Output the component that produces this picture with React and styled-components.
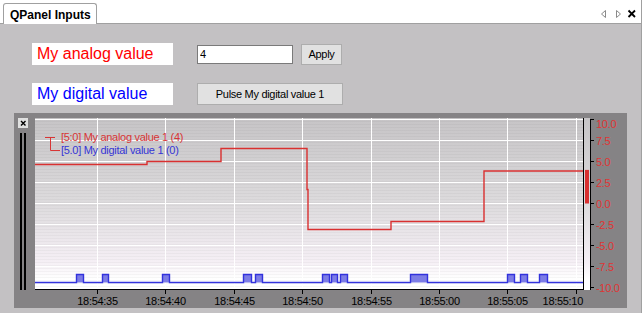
import React from 'react';
import styled, { createGlobalStyle } from 'styled-components';

const GlobalStyle = createGlobalStyle`
  html, body {
    margin: 0;
    padding: 0;
  }
  body {
    font-family: "Liberation Sans", Arial, sans-serif;
    background: #c3c1c3;
  }
`;

const Window = styled.div`
  width: 642px;
  height: 313px;
  box-sizing: border-box;
  border-right: 1px solid #a0a0a0;
  background: #c3c1c3;
  display: flex;
  flex-direction: column;
  overflow: hidden;
`;

const TabBar = styled.div`
  height: 23px;
  background: #fff;
  border-bottom: 1px solid #a0a0a0;
  display: flex;
  align-items: flex-end;
  padding-left: 3px;
`;

const Tab = styled.div`
  box-sizing: border-box;
  width: 94px;
  height: 21px;
  margin-bottom: -1px;
  padding: 2px 0 0 6px;
  border: 1px solid #a0a0a0;
  border-bottom: none;
  border-radius: 3px 3px 0 0;
  background: #fff;
  font-size: 12px;
  font-weight: bold;
  line-height: 18px;
  color: #000;
  white-space: nowrap;
`;

const TabNav = styled.svg`
  align-self: flex-start;
  margin: 5px 4px 0 auto;
`;

const Body = styled.div`
  flex: 1;
  padding: 19px 0 0 14px;
  display: flex;
  flex-direction: column;
`;

const Form = styled.div`
  display: grid;
  grid-template-columns: 141px auto;
  column-gap: 24px;
  row-gap: 18px;
  align-items: center;
  justify-content: start;
  padding-left: 18px;
`;

const ValueLabel = styled.div`
  height: 22px;
  background: #fff;
  color: ${(p) => p.$color};
  font-size: 16px;
  line-height: 22px;
  padding-left: 5px;
  white-space: nowrap;
`;

const Controls = styled.div`
  display: flex;
  align-items: center;
  gap: 8px;
`;

const ValueInput = styled.input`
  box-sizing: border-box;
  width: 96px;
  height: 19px;
  margin: 0;
  padding: 0 2px;
  border: 1px solid #7a7a7a;
  background: #fff;
  font-family: "Liberation Sans", Arial, sans-serif;
  font-size: 11px;
  color: #000;
  outline: none;
`;

const Button = styled.button`
  box-sizing: border-box;
  width: ${(p) => p.$w}px;
  height: ${(p) => p.$h}px;
  margin: 0;
  padding: 0;
  border: 1px solid #adadad;
  background: #e1e1e1;
  font-family: "Liberation Sans", Arial, sans-serif;
  font-size: 11px;
  letter-spacing: -0.3px;
  color: #000;
`;

const Panel = styled.div`
  box-sizing: border-box;
  margin-top: 8px;
  width: 613px;
  height: 195px;
  padding: 5px 0 0 4px;
  background: #858385;
  display: flex;
`;

const LeftStrip = styled.div`
  width: 17px;
  display: flex;
  flex-direction: column;
`;

const CloseBox = styled.div`
  width: 10px;
  height: 10px;
  background: #e0e0e0;
  display: flex;
`;

const Bars = styled.div`
  margin-top: 5px;
  height: 157px;
  padding-left: 2px;
  display: flex;
  gap: 2px;
`;

const Bar = styled.div`
  width: 2px;
  background: #000;
`;

const yOf = (v) => 85.5 - 8.4 * v;
const PW = 548;
const PH = 171;
const gridX = [62, 130, 199, 267, 336, 404, 472, 541];
const times = ['18:54:35', '18:54:40', '18:54:45', '18:54:50', '18:54:55', '18:55:00', '18:55:05', '18:55:10'];
const yTicks = [10, 7.5, 5, 2.5, 0, -2.5, -5, -7.5, -10];
const analog = [
  [0, 46], [112, 46], [112, 43], [186, 43], [186, 30], [272, 30], [272, 71],
  [273, 71], [273, 111], [356, 111], [356, 103], [449, 103], [449, 52.5], [PW, 52.5],
];
const pulses = [
  [41, 48], [67, 73], [127, 134], [208, 216], [220, 227], [287, 294],
  [296, 302], [305, 312], [375, 392], [472, 479], [485, 492], [504, 512],
];
const BASE = 164.5;
const TOP = 156.5;

const bluePath = () => {
  let d = `M0,${BASE}`;
  pulses.forEach(([a, b]) => {
    d += ` L${a + 0.5},${BASE} L${a + 0.5},${TOP} L${b + 0.5},${TOP} L${b + 0.5},${BASE}`;
  });
  return d + ` L${PW},${BASE}`;
};

const Chart = () => (
  <svg width="592" height="190" style={{ display: 'block' }}>
    <defs>
      <linearGradient id="bg" x1="0" y1="0" x2="0" y2="1">
        <stop offset="0" stopColor="#c6c4c6" />
        <stop offset="0.5" stopColor="#dddbdd" />
        <stop offset="0.84" stopColor="#f5eff5" />
        <stop offset="0.94" stopColor="#ffffff" />
      </linearGradient>
      <pattern id="stripes" width="4" height="3" patternUnits="userSpaceOnUse">
        <rect width="4" height="1" fill="rgba(0,0,0,0.03)" />
      </pattern>
    </defs>

    <rect x="0" y="0" width={PW} height={PH} fill="url(#bg)" />
    <rect x="0" y="0" width={PW} height={PH} fill="url(#stripes)" />
    <rect x="549" y="0" width="6" height={PH + 1} fill="url(#bg)" />

    {yTicks.map((v) => (
      <line key={v} x1="0" x2={PW} y1={yOf(v)} y2={yOf(v)} stroke="#fff" strokeWidth="1" />
    ))}
    {gridX.map((x) => (
      <line key={x} x1={x + 0.5} x2={x + 0.5} y1="0" y2={PH} stroke="#fff" strokeWidth="1" />
    ))}

    <g fontFamily="Liberation Sans, Arial, sans-serif" fontSize="11" letterSpacing="-0.3">
      <path d="M10,19.5 H20 M15.5,19.5 V32.5 H25" stroke="#d83535" fill="none" strokeWidth="1" />
      <text x="26" y="22.7" fill="#d83535">[5:0] My analog value 1 (4)</text>
      <text x="26" y="36.3" fill="#3535d5">[5.0] My digital value 1 (0)</text>
    </g>

    <polyline
      points={analog.map(([x, y]) => `${x},${y + 0.5}`).join(' ')}
      fill="none"
      stroke="#d93030"
      strokeWidth="1.4"
    />

    {pulses.map(([a, b]) => (
      <rect key={a} x={a + 0.5} y={TOP} width={b - a} height={BASE - TOP} fill="#7c7ce6" />
    ))}
    <path d={bluePath()} fill="none" stroke="#3232dc" strokeWidth="1.4" />

    <line x1="548.5" x2="548.5" y1="0" y2={PH + 1} stroke="#000" />
    <rect x="550" y={yOf(4)} width="4" height={yOf(0) - yOf(4)} fill="#d83030" />
    <line x1="555.5" x2="555.5" y1="1" y2={PH + 1} stroke="#000" />
    <line x1="0" x2={PW + 1} y1={PH + 0.5} y2={PH + 0.5} stroke="#000" />

    <g fontFamily="Liberation Sans, Arial, sans-serif" fontSize="11" letterSpacing="-0.3">
      {yTicks.map((v) => (
        <g key={v}>
          <line x1="555" x2="559" y1={yOf(v)} y2={yOf(v)} stroke="#000" />
          <text x="561" y={v === 10 ? 9.5 : yOf(v) + 4} fill="#e03434">
            {v.toFixed(1)}
          </text>
        </g>
      ))}
      {gridX.map((x, i) => (
        <g key={x}>
          <line x1={x + 0.5} x2={x + 0.5} y1={PH} y2={PH + 5} stroke="#000" />
          <text
            x={i === gridX.length - 1 ? PW : x + 0.5}
            y="186.5"
            textAnchor={i === gridX.length - 1 ? 'end' : 'middle'}
            fill="#000"
          >
            {times[i]}
          </text>
        </g>
      ))}
    </g>
  </svg>
);

export default function App() {
  return (
    <>
      <GlobalStyle />
      <Window>
        <TabBar>
          <Tab>QPanel Inputs</Tab>
          <TabNav width="42" height="14">
            <polygon points="10.5,5.5 6.5,9 10.5,12.5" fill="none" stroke="#8a8a8a" />
            <polygon points="21.5,5.5 25.5,9 21.5,12.5" fill="none" stroke="#8a8a8a" />
            <path d="M33.5,5.5 L40,12 M40,5.5 L33.5,12" stroke="#000" strokeWidth="1.8" />
          </TabNav>
        </TabBar>
        <Body>
          <Form>
            <ValueLabel $color="#ff0000">My analog value</ValueLabel>
            <Controls>
              <ValueInput defaultValue="4" />
              <Button $w={41} $h={21}>Apply</Button>
            </Controls>
            <ValueLabel $color="#0000ff">My digital value</ValueLabel>
            <Controls>
              <Button $w={146} $h={22}>Pulse My digital value 1</Button>
            </Controls>
          </Form>
          <Panel>
            <LeftStrip>
              <CloseBox>
                <svg width="10" height="10">
                  <path d="M3,3 L7.5,7.5 M7.5,3 L3,7.5" stroke="#000" strokeWidth="1.4" />
                </svg>
              </CloseBox>
              <Bars>
                <Bar />
                <Bar />
              </Bars>
            </LeftStrip>
            <Chart />
          </Panel>
        </Body>
      </Window>
    </>
  );
}
